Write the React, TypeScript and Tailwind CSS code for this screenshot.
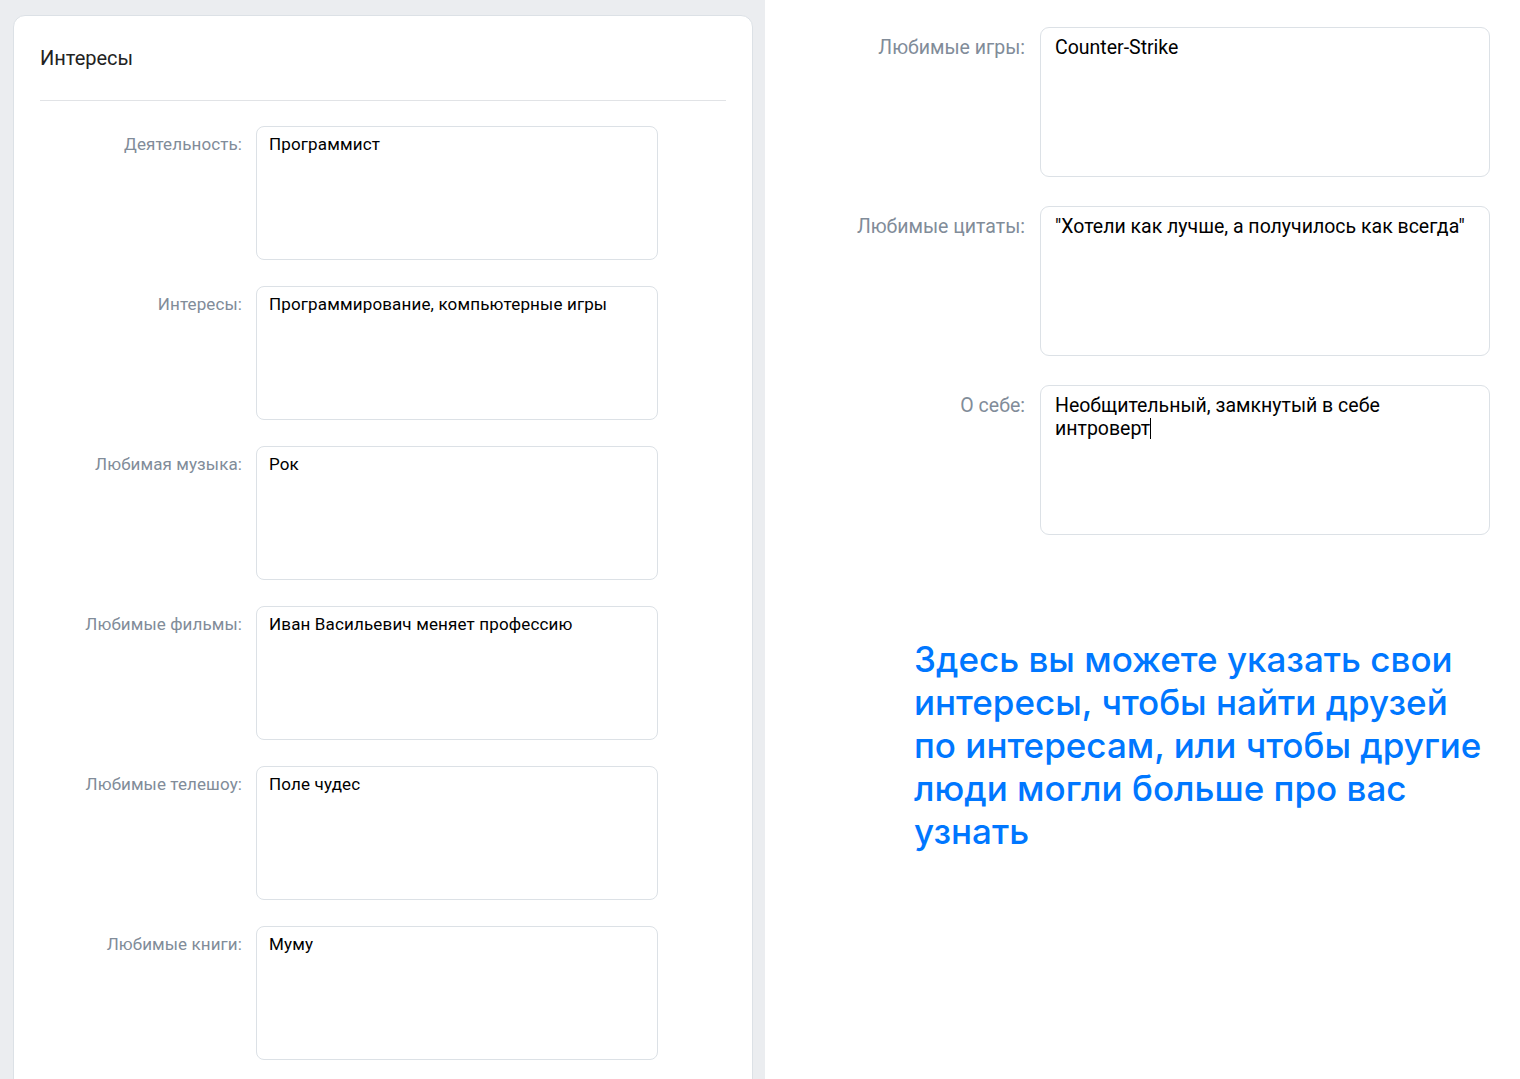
const leftFields = [
    { label: 'Деятельность:', value: 'Программист' },
    { label: 'Интересы:', value: 'Программирование, компьютерные игры' },
    { label: 'Любимая музыка:', value: 'Рок' },
    { label: 'Любимые фильмы:', value: 'Иван Васильевич меняет профессию' },
    { label: 'Любимые телешоу:', value: 'Поле чудес' },
    { label: 'Любимые книги:', value: 'Муму' },
]

const rightFields = [
    { label: 'Любимые игры:', value: 'Counter-Strike' },
    { label: 'Любимые цитаты:', value: '"Хотели как лучше, а получилось как всегда"' },
    { label: 'О себе:', value: 'Необщительный, замкнутый в себе\nинтроверт', caret: true },
]

const App = () => {
    return (
        <div className="flex h-[1079px] w-[1520px] overflow-hidden bg-white font-['Roboto',sans-serif]">
            <div className="w-[765px] shrink-0 bg-[#ebedf0] pl-[13px] pr-[12px] pt-[15px]">
                <div className="h-[1100px] rounded-t-[12px] border border-[#dce1e6] bg-white px-[26px]">
                    <div className="flex h-[84px] items-center">
                        <h2 className="text-[20px] text-[#222]">Интересы</h2>
                    </div>
                    <div className="h-px bg-[#e1e3e6]" />
                    <div className="flex flex-col gap-[26px] pt-[25px]">
                        {leftFields.map((field) => (
                            <div key={field.label} className="flex gap-[14px]">
                                <div className="w-[202px] shrink-0 pt-[8px] text-right text-[17px] leading-[20px] tracking-[0.1px] text-[#818c99]">
                                    {field.label}
                                </div>
                                <div className="h-[134px] w-[402px] rounded-[8px] border border-[#dce1e6] px-[12px] pt-[7px] text-[17px] leading-[20px] tracking-[0.15px] text-black">
                                    {field.value}
                                </div>
                            </div>
                        ))}
                    </div>
                </div>
            </div>
            <div className="flex-1 pt-[27px]">
                <div className="flex flex-col gap-[29px]">
                    {rightFields.map((field) => (
                        <div key={field.label} className="flex gap-[15px]">
                            <div className="w-[260px] shrink-0 pt-[9px] text-right text-[19.5px] leading-[23px] text-[#818c99]">
                                {field.label}
                            </div>
                            <div className="h-[150px] w-[450px] whitespace-pre-line rounded-[9px] border border-[#dce1e6] pl-[14px] pr-[10px] pt-[8px] text-[19.5px] leading-[23px] text-black">
                                {field.value}
                                {field.caret && (
                                    <span className="relative">
                                        <span className="absolute left-0 top-[1px] h-[21px] w-px bg-black" />
                                    </span>
                                )}
                            </div>
                        </div>
                    ))}
                </div>
                <p className="mt-[103px] max-w-[724px] pl-[149px] font-['Inter',sans-serif] text-[35px] font-medium leading-[43px] text-[#0077ff]">
                    Здесь вы можете указать свои интересы, чтобы найти друзей по интересам, или чтобы другие люди могли больше про вас узнать
                </p>
            </div>
        </div>
    )
}

export default App
